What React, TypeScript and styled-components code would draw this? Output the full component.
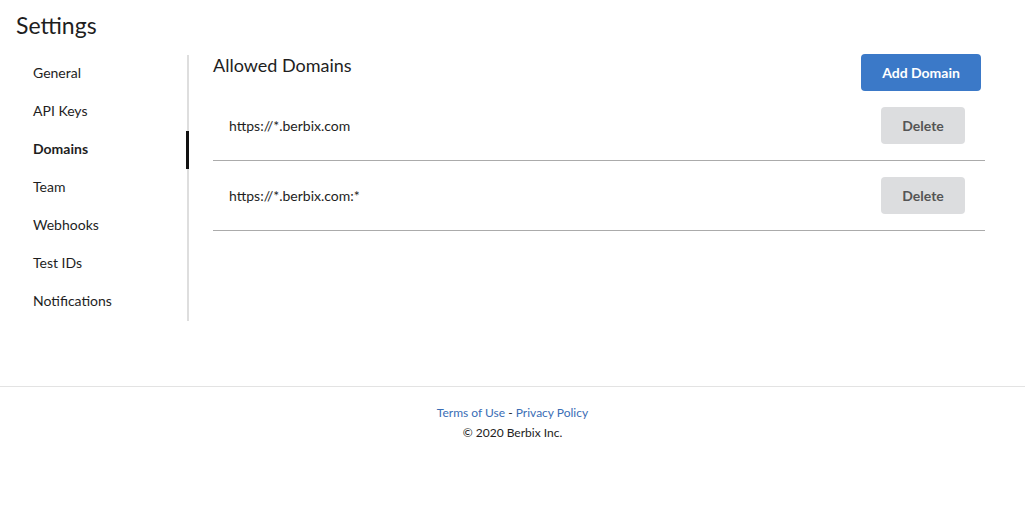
import React from 'react'
import styled, { createGlobalStyle } from 'styled-components'

const GlobalStyle = createGlobalStyle`
    body {
        margin: 0;
        background: #fff;
        font-family: Lato, "Open Sans", sans-serif;
        color: #1e1e1e;
    }
`

const Page = styled.div`
    width: 1025px;
`

const Main = styled.div`
    padding: 0 16px;
    height: 386px;
`

const Title = styled.h1`
    margin: 0;
    padding-top: 10px;
    height: 55px;
    box-sizing: border-box;
    font-size: 23px;
    font-weight: 400;
    line-height: 30px;
`

const Layout = styled.div`
    display: flex;
    align-items: flex-start;
`

const Sidebar = styled.nav`
    width: 171px;
    border-right: 2px solid #dedede;
    display: flex;
    flex-direction: column;
`

const NavItem = styled.div<{ $active?: boolean }>`
    position: relative;
    height: 38px;
    box-sizing: border-box;
    padding: 8px 0 0 17px;
    font-size: 14px;
    line-height: 20px;
    font-weight: ${p => (p.$active ? 700 : 400)};
    color: #1e1e1e;

    &::after {
        content: '';
        display: ${p => (p.$active ? 'block' : 'none')};
        position: absolute;
        top: 0;
        right: -2px;
        width: 3px;
        height: 100%;
        background: #111;
    }
`

const Content = styled.section`
    width: 772px;
    margin-left: 24px;
`

const ContentHeader = styled.div`
    height: 37px;
    margin-top: -1px;
    display: flex;
    align-items: center;
    justify-content: space-between;
    padding-right: 4px;

    h2 {
        margin: 0;
        font-size: 18px;
        font-weight: 400;
        align-self: flex-start;
        line-height: 22px;
    }
`

const Button = styled.button<{ $variant: 'primary' | 'secondary' }>`
    border: none;
    border-radius: 4px;
    height: 37px;
    font-family: Lato, sans-serif;
    font-size: 14px;
    font-weight: 700;
    cursor: pointer;
    width: ${p => (p.$variant === 'primary' ? '120px' : '84px')};
    background: ${p => (p.$variant === 'primary' ? '#3b79c8' : '#dcdddf')};
    color: ${p => (p.$variant === 'primary' ? '#fff' : '#555')};
`

const DomainRow = styled.div`
    height: 69px;
    display: flex;
    align-items: center;
    justify-content: space-between;
    padding: 0 20px 0 16px;
    border-bottom: 1px solid #ababab;
    font-size: 14px;
`

const Footer = styled.footer`
    border-top: 1px solid #e3e3e3;
    padding-top: 16px;
    text-align: center;
    font-size: 12px;
    line-height: 20px;
    color: #222;

    a {
        color: #3a6db5;
        text-decoration: none;
    }
`

const navItems = ['General', 'API Keys', 'Domains', 'Team', 'Webhooks', 'Test IDs', 'Notifications']
const domains = ['https://*.berbix.com', 'https://*.berbix.com:*']

const App: React.FC = () => {
    return (
        <Page>
            <GlobalStyle />
            <Main>
                <Title>Settings</Title>
                <Layout>
                    <Sidebar>
                        {navItems.map(item => (
                            <NavItem key={item} $active={item === 'Domains'}>{item}</NavItem>
                        ))}
                    </Sidebar>
                    <Content>
                        <ContentHeader>
                            <h2>Allowed Domains</h2>
                            <Button $variant='primary'>Add Domain</Button>
                        </ContentHeader>
                        {domains.map(domain => (
                            <DomainRow key={domain}>
                                <span>{domain}</span>
                                <Button $variant='secondary'>Delete</Button>
                            </DomainRow>
                        ))}
                    </Content>
                </Layout>
            </Main>
            <Footer>
                <div><a href='#'>Terms of Use</a> - <a href='#'>Privacy Policy</a></div>
                <div>© 2020 Berbix Inc.</div>
            </Footer>
        </Page>
    )
}

export default App
